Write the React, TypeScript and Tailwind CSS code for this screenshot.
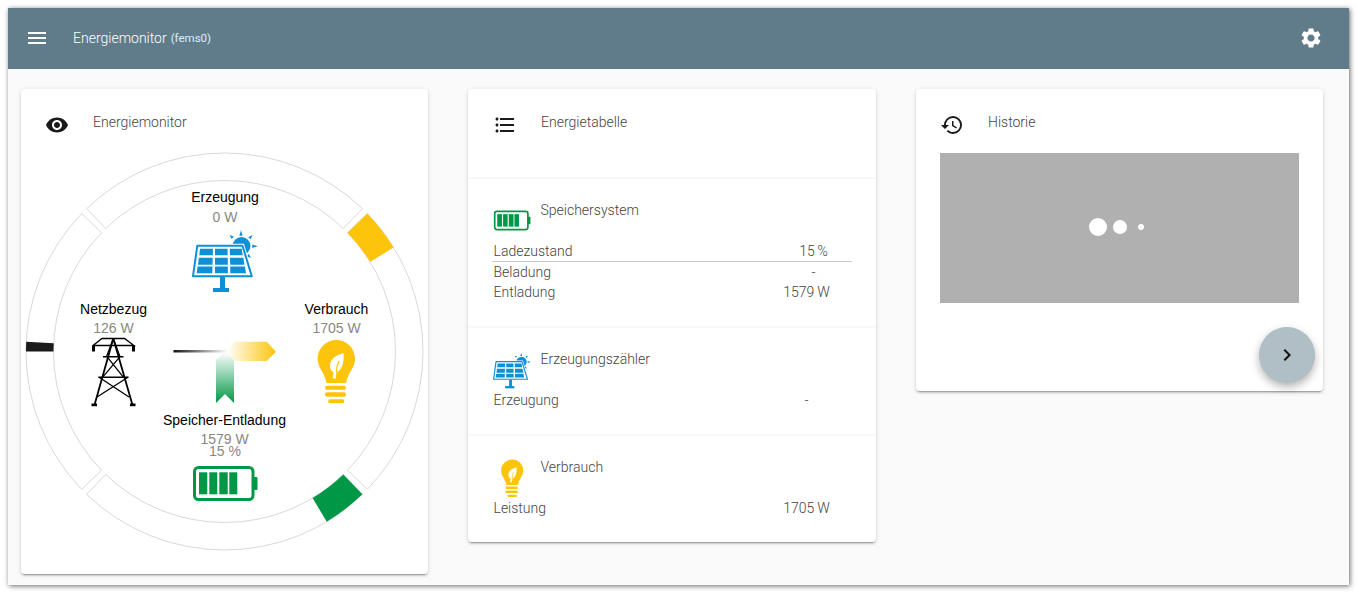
import { MdChevronRight, MdFormatListBulleted, MdHistory, MdMenu, MdSettings, MdVisibility } from 'react-icons/md';

const CX = 224.5;
const CY = 351.5;
const R_OUT = 198.5;
const R_IN = 171;

// angles in degrees, clockwise from the top
const point = (r: number, deg: number) => {
  const a = (deg * Math.PI) / 180;
  return `${(CX + r * Math.sin(a)).toFixed(2)} ${(CY - r * Math.cos(a)).toFixed(2)}`;
};

const sector = (from: number, to: number) =>
  `M${point(R_OUT, from)} A${R_OUT} ${R_OUT} 0 0 1 ${point(R_OUT, to)} L${point(R_IN, to)} A${R_IN} ${R_IN} 0 0 0 ${point(R_IN, from)} Z`;

const SolarIcon = ({ className }: { className?: string }) => (
  <svg viewBox="0 0 66 64" className={className}>
    <g fill="#0c90d6">
      <circle cx="49.500" cy="17" r="9" />
      <path d="M49 1l1.600 5.700h-3.200z" />
      <path d="M37.500 6l4.300 1.600-2 2.400z" />
      <path d="M60.500 6l-1.800 4.300-2.500-2z" />
      <path d="M65.700 17.300l-5.400 1.600v-3.400z" />
      <path d="M59 29l-4.200-1.700 2-2.500z" />
    </g>
    <path d="M5.300 16.700H50.500L59.800 47.200H1z" fill="#fff" stroke="#fff" strokeWidth="4" />
    <path d="M5.300 16.700H50.500L59.800 47.200H1z" fill="#fff" stroke="#0c90d6" strokeWidth="2" strokeLinejoin="round" />
    <g fill="#0c90d6">
      <path d="M8 19.700H21L20.800 26.300H7.200z" />
      <path d="M23 19.700H35.500L35.700 26.300H23z" />
      <path d="M37.700 19.700H49.700L50.800 26.300H38z" />
      <path d="M6.900 28.800H20.700L20.500 35.700H6z" />
      <path d="M23 28.800H35.700L35.800 35.700H23z" />
      <path d="M38 28.800H51.400L52.500 35.700H38.200z" />
      <path d="M5.600 37.500H20.500L20.300 44.200H4.700z" />
      <path d="M23 37.500H35.800L35.900 44.200H23z" />
      <path d="M38.200 37.500H53L54 44.200H38.300z" />
      <rect x="28" y="48" width="5" height="12" />
      <rect x="21" y="59" width="16" height="4" />
    </g>
  </svg>
);

const BulbIcon = ({ className }: { className?: string }) => (
  <svg viewBox="0 0 40 66" className={className}>
    <g fill="#fdc40c">
      <path d="M20.300 1A18.700 18.700 0 0 1 39 19.700C39 29 32 33 30 44H10.500C8.600 33 1.600 29 1.600 19.700A18.700 18.700 0 0 1 20.300 1Z" />
      <rect x="9" y="46.700" width="21" height="4" rx="2" />
      <rect x="9" y="53.300" width="21" height="4.400" rx="2" />
      <rect x="12.300" y="60.300" width="16" height="4" rx="2" />
    </g>
    <path d="M27.500 14.300C20 16 13.500 20 14 27.500C14.200 30 15.500 32 17.500 33.500L16.800 39.500H19.800L20.300 33.500C25.500 31.500 28.500 24 27.500 14.300Z" fill="#fff" />
    <path d="M20.300 33.500C20.300 29 21.200 25.500 23 22" stroke="#fdc40c" strokeWidth="1.300" fill="none" />
  </svg>
);

const BatteryIcon = ({ className }: { className?: string }) => (
  <svg viewBox="0 0 66 37" className={className}>
    <g fill="#009846">
      <rect x="61" y="12" width="4.500" height="13" rx="1" />
      <rect x="7" y="7.300" width="8.300" height="22" />
      <rect x="17.300" y="7.300" width="8" height="22" />
      <rect x="27.300" y="7.300" width="8.400" height="22" />
      <rect x="37.300" y="7.300" width="8" height="22" />
    </g>
    <rect x="2.500" y="2.500" width="58.500" height="32" rx="4" fill="none" stroke="#009846" strokeWidth="3" />
  </svg>
);

const TowerIcon = ({ className }: { className?: string }) => (
  <svg viewBox="0 0 45 70" className={className}>
    <g stroke="#000" fill="none" strokeWidth="1.300">
      <path d="M2 8.500L11 1.500H33.500L43 8.500H1.500" />
      <path d="M22.300 1.500L3.500 68M22.300 1.500L41.500 68" strokeWidth="1.800" />
      <path d="M22.300 1.500L15.500 19.700M22.300 1.500L29 19.700" />
      <path d="M12 19.700H32.500M7.300 40.300H37.500" strokeWidth="1.500" />
      <path d="M16 19.700L32.500 40.300M29 19.700L11.500 40.300" />
      <path d="M8 40.300L38 60M37 40.300L6 60" />
    </g>
    <g fill="#000">
      <rect x="1" y="8.500" width="3" height="6" />
      <rect x="41" y="8.500" width="3" height="6" />
      <rect x="0.500" y="66.500" width="5.500" height="2.700" />
      <rect x="39" y="66.500" width="5.500" height="2.700" />
    </g>
  </svg>
);

const FlowDiagram = () => (
  <svg viewBox="21 149 407 425" className="block w-[407px] h-[425px] mt-3 font-['Liberation_Sans',Arial,sans-serif]">
    <defs>
      <linearGradient id="gridFlow" x1="0" x2="1" y1="0" y2="0">
        <stop offset="0" stopColor="#111" />
        <stop offset="1" stopColor="#111" stopOpacity="0" />
      </linearGradient>
      <linearGradient id="productionFlow" x1="0" x2="1" y1="0" y2="0">
        <stop offset="0" stopColor="#fdc40c" stopOpacity="0" />
        <stop offset="1" stopColor="#fdc40c" />
      </linearGradient>
      <linearGradient id="storageFlow" x1="0" x2="0" y1="0" y2="1">
        <stop offset="0" stopColor="#009846" stopOpacity="0" />
        <stop offset="1" stopColor="#009846" />
      </linearGradient>
    </defs>

    <g fill="#fff" stroke="#d9d9d9" strokeWidth="1">
      <path d={sector(-44, 44)} />
      <path d={sector(46, 134)} />
      <path d={sector(136, 224)} />
      <path d={sector(226, 314)} />
    </g>
    <path d={sector(46, 58.4)} fill="#fdc40c" />
    <path d={sector(136, 149)} fill="#009846" />
    <path d={sector(270, 272.8)} fill="#1a1a1a" />

    <rect x="173.500" y="350" width="54" height="2.500" fill="url(#gridFlow)" />
    <path d="M226.700 351.700L235 341.700H266.700L276 351.700L266.700 361H235Z" fill="url(#productionFlow)" />
    <path d="M225 352.300L234 360V403L225 394L216 403V360Z" fill="url(#storageFlow)" />

    <g fontSize="14" textAnchor="middle">
      <text x="225" y="202" fill="#000">Erzeugung</text>
      <text x="225" y="222" fill="#888">0 W</text>
      <text x="113.500" y="314" fill="#000">Netzbezug</text>
      <text x="113.500" y="333" fill="#888">126 W</text>
      <text x="336.500" y="314" fill="#000">Verbrauch</text>
      <text x="336.500" y="333" fill="#888">1705 W</text>
      <text x="224.500" y="425" fill="#000">Speicher-Entladung</text>
      <text x="224.500" y="444" fill="#888">1579 W</text>
      <text x="225" y="456" fill="#888">15 %</text>
    </g>

    <svg x="192" y="229" width="66" height="64"><SolarIcon /></svg>
    <svg x="91" y="337" width="45" height="70"><TowerIcon /></svg>
    <svg x="316" y="339" width="40" height="66"><BulbIcon /></svg>
    <svg x="192" y="465" width="66" height="37"><BatteryIcon /></svg>
  </svg>
);

const CardTitle = ({ icon, title, wide }: { icon: JSX.Element; title: string; wide?: boolean }) => (
  <div className={`flex items-start pt-[23px] ${wide ? 'pl-[25px]' : 'pl-6'}`}>
    <div className="w-6 h-6 mt-[1px] text-[#1a1a1a]">{icon}</div>
    <h3 className="ml-6 text-sm leading-5 text-[#444]">{title}</h3>
  </div>
);

const Row = ({ label, value, shift, line }: { label: string; value: string; shift?: boolean; line?: boolean }) => (
  <div className={`flex mx-6 pl-[1.5px] text-sm leading-5 text-[#444] ${line ? 'h-[21px] border-b border-[#ccc]' : 'h-5'}`}>
    <span className="flex-1">{label}</span>
    <span className={`w-[91px] text-center ${shift ? 'pl-[14px]' : ''}`}>{value}</span>
  </div>
);

const SectionHead = ({ icon, title }: { icon: JSX.Element; title: string }) => (
  <div className="flex items-start pt-[21px] box-content h-[41px]">
    <div className="w-[72.5px] shrink-0 pl-[25px]">{icon}</div>
    <h3 className="text-sm leading-5 text-[#444]">{title}</h3>
  </div>
);

export default function App() {
  return (
    <div className="min-h-screen bg-white p-2 font-['Roboto',sans-serif] font-light">
      <div className="w-[1341px] h-[577px] bg-[#fafafa] shadow-[1px_1px_5px_rgba(0,0,0,0.6)]">
        <header className="h-[61px] bg-[#607c8a] flex items-center pb-[1px] pl-[17px] pr-[26px] text-white">
          <MdMenu className="w-6 h-6" />
          <span className="ml-6 text-sm">Energiemonitor</span>
          <span className="ml-1 mt-[1px] text-[11.5px] font-normal text-[#d5f1fb]">(fems0)</span>
          <MdSettings className="w-6 h-6 ml-auto" />
        </header>

        <main className="flex items-start gap-10 pl-[13px] pt-5">
          <section className="w-[407px] bg-white rounded-sm shadow-[0_2px_2px_rgba(0,0,0,0.14),0_3px_1px_-2px_rgba(0,0,0,0.2),0_1px_5px_rgba(0,0,0,0.12)]">
            <CardTitle icon={<MdVisibility className="w-6 h-6" />} title="Energiemonitor" />
            <FlowDiagram />
          </section>

          <section className="w-[408px] bg-white rounded-sm shadow-[0_2px_2px_rgba(0,0,0,0.14),0_3px_1px_-2px_rgba(0,0,0,0.2),0_1px_5px_rgba(0,0,0,0.12)]">
            <div className="h-[88px]">
              <CardTitle wide icon={<MdFormatListBulleted className="w-6 h-6" />} title="Energietabelle" />
            </div>

            <div className="h-[149px] border-t-2 border-[#f8f8f8]">
              <SectionHead title="Speichersystem" icon={<BatteryIcon className="w-[38px] h-[21px] mt-[10px]" />} />
              <Row label="Ladezustand" value={'15\u2009%'} shift line />
              <Row label="Beladung" value="-" shift />
              <Row label="Entladung" value={'1579\u2009W'} />
            </div>

            <div className="h-[108px] border-t-2 border-[#f8f8f8]">
              <SectionHead title="Erzeugungszähler" icon={<SolarIcon className="w-[38px] h-[37px] mt-[3px]" />} />
              <Row label="Erzeugung" value="-" />
            </div>

            <div className="h-[108px] border-t-2 border-[#f8f8f8]">
              <SectionHead title="Verbrauch" icon={<BulbIcon className="w-[24px] h-[39px] ml-[7px] mt-[2px]" />} />
              <Row label="Leistung" value={'1705\u2009W'} />
            </div>
          </section>

          <section className="relative w-[407px] h-[302px] bg-white rounded-sm shadow-[0_2px_2px_rgba(0,0,0,0.14),0_3px_1px_-2px_rgba(0,0,0,0.2),0_1px_5px_rgba(0,0,0,0.12)]">
            <CardTitle icon={<MdHistory className="w-6 h-6" />} title="Historie" />
            <div className="mt-4 mx-6 h-[150px] bg-[#b0b0b0] flex items-center justify-center pr-[6px] pb-[2px]">
              <span className="w-[18px] h-[18px] rounded-full bg-white" />
              <span className="ml-[6px] w-[14px] h-[14px] rounded-full bg-white" />
              <span className="ml-[11px] w-[6px] h-[6px] rounded-full bg-white" />
            </div>
            <button className="absolute right-2 bottom-2 w-14 h-14 rounded-full bg-[#b0bec5] flex items-center justify-center text-[#111] shadow-[0_4px_8px_rgba(0,0,0,0.3)]">
              <MdChevronRight className="w-6 h-6" />
            </button>
          </section>
        </main>
      </div>
    </div>
  );
}
